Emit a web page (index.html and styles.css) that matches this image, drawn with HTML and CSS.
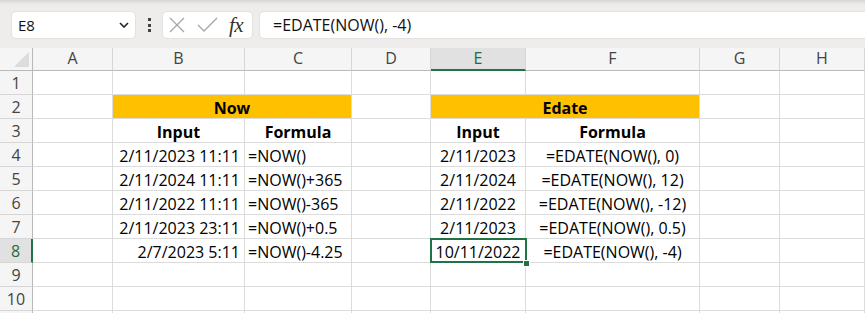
FILE: index.html
```html
<!DOCTYPE html>
<html lang="en">
<head>
  <meta charset="UTF-8" />
  <title>EDATE vs NOW</title>
  <link rel="stylesheet" href="styles.css">
</head>
<body>

<!-- Formula bar -->
<div class="toolbar">
  <div class="namebox">
    <span>E8</span>
    <svg width="10" height="6" viewBox="0 0 10 6"><path d="M1 1 L5 5 L9 1" fill="none" stroke="#222" stroke-width="1.6"/></svg>
  </div>
  <div class="dots"><i></i><i></i><i></i></div>
  <div class="fxbox">
    <svg width="16" height="16" viewBox="0 0 16 16"><path d="M1 1 L15 15 M15 1 L1 15" stroke="#a6a6a6" stroke-width="1.3"/></svg>
    <svg width="21" height="16" viewBox="0 0 21 16"><path d="M1 8 L7 14 L20 1" fill="none" stroke="#a6a6a6" stroke-width="1.3"/></svg>
    <span class="fx">fx</span>
  </div>
  <div class="formula">=EDATE(NOW(), -4)</div>
</div>

<!-- Worksheet -->
<div class="sheet">
  <div class="corner"><i></i></div>
  <div class="ch">A</div><div class="ch">B</div><div class="ch">C</div><div class="ch">D</div>
  <div class="ch act">E</div><div class="ch">F</div><div class="ch">G</div><div class="ch">H</div>

  <div class="rh">1</div>
  <div class="cell"></div><div class="cell"></div><div class="cell"></div><div class="cell"></div>
  <div class="cell"></div><div class="cell"></div><div class="cell"></div><div class="cell"></div>

  <div class="rh">2</div>
  <div class="cell"></div>
  <div class="cell band">Now</div>
  <div class="cell"></div>
  <div class="cell band">Edate</div>
  <div class="cell"></div><div class="cell"></div>

  <div class="rh">3</div>
  <div class="cell"></div>
  <div class="cell c b">Input</div><div class="cell c b">Formula</div>
  <div class="cell"></div>
  <div class="cell c b">Input</div><div class="cell c b">Formula</div>
  <div class="cell"></div><div class="cell"></div>

  <div class="rh">4</div>
  <div class="cell"></div>
  <div class="cell r">2/11/2023 11:11</div><div class="cell l">=NOW()</div>
  <div class="cell"></div>
  <div class="cell c">2/11/2023</div><div class="cell c">=EDATE(NOW(), 0)</div>
  <div class="cell"></div><div class="cell"></div>

  <div class="rh">5</div>
  <div class="cell"></div>
  <div class="cell r">2/11/2024 11:11</div><div class="cell l">=NOW()+365</div>
  <div class="cell"></div>
  <div class="cell c">2/11/2024</div><div class="cell c">=EDATE(NOW(), 12)</div>
  <div class="cell"></div><div class="cell"></div>

  <div class="rh">6</div>
  <div class="cell"></div>
  <div class="cell r">2/11/2022 11:11</div><div class="cell l">=NOW()-365</div>
  <div class="cell"></div>
  <div class="cell c">2/11/2022</div><div class="cell c">=EDATE(NOW(), -12)</div>
  <div class="cell"></div><div class="cell"></div>

  <div class="rh">7</div>
  <div class="cell"></div>
  <div class="cell r">2/11/2023 23:11</div><div class="cell l">=NOW()+0.5</div>
  <div class="cell"></div>
  <div class="cell c">2/11/2023</div><div class="cell c">=EDATE(NOW(), 0.5)</div>
  <div class="cell"></div><div class="cell"></div>

  <div class="rh act">8</div>
  <div class="cell"></div>
  <div class="cell r">2/7/2023 5:11</div><div class="cell l">=NOW()-4.25</div>
  <div class="cell"></div>
  <div class="cell c sel">10/11/2022</div><div class="cell c">=EDATE(NOW(), -4)</div>
  <div class="cell"></div><div class="cell"></div>

  <div class="rh">9</div>
  <div class="cell"></div><div class="cell"></div><div class="cell"></div><div class="cell"></div>
  <div class="cell"></div><div class="cell"></div><div class="cell"></div><div class="cell"></div>

  <div class="rh">10</div>
  <div class="cell"></div><div class="cell"></div><div class="cell"></div><div class="cell"></div>
  <div class="cell"></div><div class="cell"></div><div class="cell"></div><div class="cell"></div>

  <!-- row 11 only peeks in at the bottom edge -->
  <div class="rh"></div>
  <div class="cell"></div><div class="cell"></div><div class="cell"></div><div class="cell"></div>
  <div class="cell"></div><div class="cell"></div><div class="cell"></div><div class="cell"></div>
</div>

</body>
</html>
```

FILE: styles.css
```css
body {
  margin: 0;
  font-family: 'Open Sans', sans-serif;
  background-color: #fff;
  overflow: hidden;
}

.toolbar {
  height: 48px;
  box-sizing: border-box;
  padding: 11px 0 0 11px;
  display: flex;
  align-items: flex-start;
  background: linear-gradient(#d8d6d4 0, #eceae8 4px, #efedeb 8px);
}

.namebox,
.fxbox,
.formula {
  height: 28px;
  box-sizing: border-box;
  background-color: #fff;
  border: 1px solid #e4e2e0;
  border-radius: 5px;
  display: flex;
  align-items: center;
}

.namebox {
  width: 125px;
  padding: 0 6px 0 6px;
  justify-content: space-between;
  font-size: 15px;
  color: #111;
}

.dots {
  width: 3px;
  margin: 7px 11px 0 12px;
  display: flex;
  flex-direction: column;
  gap: 2.5px;
}

.dots i {
  width: 3px;
  height: 3px;
  background-color: #444;
}

.fxbox {
  width: 91px;
  padding-left: 6px;
  gap: 12px;
}

.fx {
  font-family: 'Liberation Serif', serif;
  font-style: italic;
  font-size: 21px;
  color: #333;
  margin-left: -1px;
  letter-spacing: -0.5px;
}

.formula {
  flex: 1;
  margin-left: 6px;
  margin-right: -10px;
  padding-left: 13px;
  font-size: 16px;
  color: #111;
}

.sheet {
  display: grid;
  grid-template-columns: 33px 80px 132px 107px 79px 95px 174px 80px 85px;
  grid-template-rows: 23px;
  grid-auto-rows: 24px;
  font-size: 16px;
}

.corner,
.ch,
.rh {
  background-color: #f5f5f5;
  color: #444;
  box-sizing: border-box;
}

.corner {
  border-right: 1px solid #b9b9b9;
  border-bottom: 1px solid #b9b9b9;
  display: flex;
  justify-content: flex-end;
  align-items: flex-end;
  padding: 0 3px 3px 0;
}

.corner i {
  width: 15px;
  height: 15px;
  background-color: #dcdcdc;
  clip-path: polygon(100% 0, 100% 100%, 0 100%);
}

.ch {
  text-align: center;
  line-height: 21px;
  border-right: 1px solid #d6d6d6;
  border-bottom: 1px solid #b9b9b9;
}

.rh {
  text-align: center;
  padding-top: 3px;
  line-height: 19px;
  border-right: 1px solid #b9b9b9;
  border-bottom: 1px solid #d6d6d6;
}

.ch.act {
  background-color: #e1e1e1;
  color: #1e6b40;
  border-bottom: 2px solid #217346;
  line-height: 20px;
}

.rh.act {
  background-color: #e1e1e1;
  color: #1e6b40;
  border-right: 2px solid #217346;
}

.cell {
  box-sizing: border-box;
  border-right: 1px solid #dcdcdc;
  border-bottom: 1px solid #dcdcdc;
  padding: 4px 4px 0 4px;
  line-height: 19px;
  white-space: nowrap;
  color: #000;
}

.cell.r { text-align: right; }
.cell.l { text-align: left; padding-left: 3px; }
.cell.c { text-align: center; }
.cell.b { font-weight: bold; }

.cell.band {
  grid-column: span 2;
  background-color: #ffc000;
  font-weight: bold;
  text-align: center;
}

.cell.sel {
  position: relative;
  z-index: 2;
}

.cell.sel::after {
  content: '';
  position: absolute;
  left: -1px;
  top: -1px;
  right: -2px;
  bottom: -1px;
  border: 2px solid #217346;
}

.cell.sel::before {
  content: '';
  position: absolute;
  right: -5px;
  bottom: -5px;
  width: 5px;
  height: 5px;
  background-color: #217346;
  border: 1px solid #fff;
  z-index: 3;
}
```
